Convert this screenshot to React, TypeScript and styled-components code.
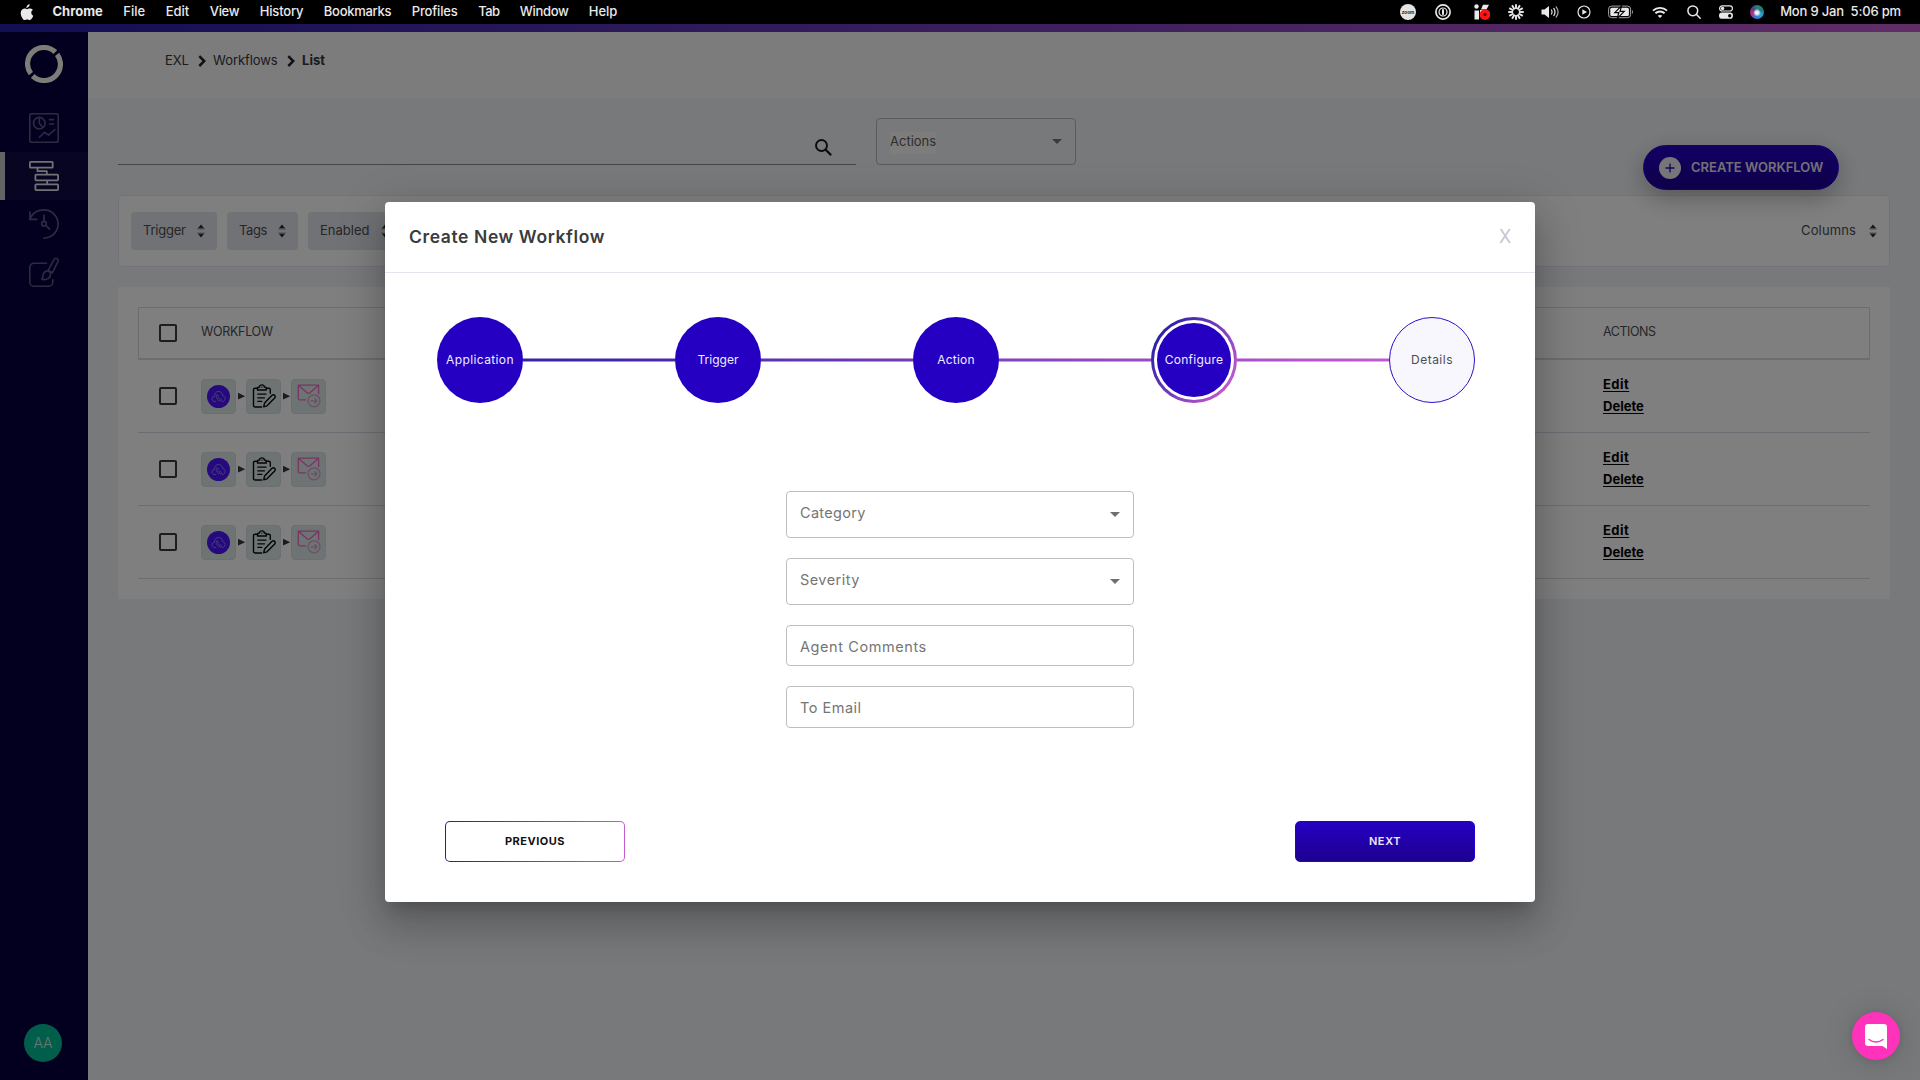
import React from "react";
import styled, { createGlobalStyle, css } from "styled-components";

const GlobalStyle = createGlobalStyle`
  *, *::before, *::after { box-sizing: border-box; }
  html, body { margin: 0; padding: 0; }
  body {
    width: 1920px;
    height: 1080px;
    overflow: hidden;
    background: #000;
    color: #44464a;
    font-family: Inter, "Liberation Sans", sans-serif;
    font-size: 13px;
  }
  button { font: inherit; border: 0; padding: 0; background: none; }
  svg { display: block; flex: none; }
`;

const Screen = styled.div`
  width: 1920px;
  height: 1080px;
  display: flex;
  flex-direction: column;
`;

/* ---------- macOS menu bar ---------- */

const MenuBar = styled.header`
  height: 24px;
  flex: none;
  display: flex;
  align-items: center;
  justify-content: space-between;
  padding: 0 19px 0 20px;
  background: #000;
  color: #e9e9e9;
  font-size: 13px;
  font-weight: 500;
`;

const MenuGroup = styled.div`
  display: flex;
  align-items: center;
`;

const MenuItem = styled.span<{ $bold?: boolean; $ls?: number }>`
  margin-left: ${(p) => (p.$bold ? 18.5 : 20.5)}px;
  padding-bottom: 2px;
  font-weight: ${(p) => (p.$bold ? 700 : 500)};
  letter-spacing: ${(p) => p.$ls ?? 0}px;
  white-space: pre;
`;

const StatusSlot = styled.span<{ $gap: number }>`
  margin-left: ${(p) => p.$gap}px;
`;

const Clock = styled.span`
  margin-left: 16px;
  padding-bottom: 2px;
  letter-spacing: -0.17px;
  white-space: pre;
`;

const AppleLogo = () => (
  <svg width="14" height="17" viewBox="0 0 14 17" fill="#e9e9e9">
    <path d="M9.6 0.2c.1 1-.3 1.900-.9 2.600-.6.700-1.500 1.100-2.300 1.100-.1-.9.300-1.900.9-2.500.6-.700 1.600-1.200 2.300-1.200zM12.900 6c-1 .6-1.600 1.500-1.600 2.700 0 1.400.8 2.500 2 3-.3.900-.7 1.700-1.200 2.400-.7 1-1.400 2-2.400 2-1 0-1.300-.6-2.500-.6s-1.600.6-2.500.6c-1 0-1.800-1.100-2.500-2.100C.9 12.100.2 9.300 1.100 7.100 1.700 5.500 3.200 4.500 4.600 4.500c1 0 1.900.7 2.500.7s1.700-.8 2.900-.7c.5 0 2 .2 2.900 1.500z" />
  </svg>
);

const ZoomStatus = () => (
  <svg width="16" height="16" viewBox="0 0 16 16">
    <circle cx="8" cy="8" r="8" fill="#e4e4e4" />
    <text x="8" y="9.600" fontSize="4.600" fontWeight="700" textAnchor="middle" fill="#222" fontFamily="Inter, sans-serif">zoom</text>
  </svg>
);

const KeyStatus = () => (
  <svg width="16" height="16" viewBox="0 0 16 16" fill="none" stroke="#e9e9e9">
    <circle cx="8" cy="8" r="7.100" strokeWidth="1.700" />
    <circle cx="8" cy="8" r="4" strokeWidth="1.200" />
    <path d="M8 5.200v5.600" strokeWidth="2" />
  </svg>
);

const RecordStatus = () => (
  <svg width="16" height="16" viewBox="0 0 16 16" fill="#e9e9e9">
    <circle cx="2.500" cy="2.500" r="2.200" />
    <path d="M7 5.500 9 .8h6L12.500 5.500zM.5 6.500H5V15.500H.5z" />
    <path d="M6 6h4v4H6z" />
    <circle cx="11" cy="10.500" r="5.400" fill="#ff1414" />
    <circle cx="11" cy="10.500" r="1.700" fill="#6b0000" />
  </svg>
);

const BurstStatus = () => (
  <svg width="16" height="16" viewBox="0 0 16 16" stroke="#e9e9e9" strokeWidth="1.900">
    {Array.from({ length: 12 }, (_, i) => (
      <path key={i} d="M8 .2v4.900" transform={`rotate(${i * 30} 8 8)`} />
    ))}
  </svg>
);

const VolumeStatus = () => (
  <svg width="18" height="14" viewBox="0 0 18 14" fill="none" stroke="#e9e9e9" strokeLinecap="round">
    <path d="M.5 4.500h3L8 1v12L3.500 9.500h-3z" fill="#e9e9e9" stroke="none" />
    <path d="M10.500 5c.8 1.200.8 2.800 0 4" strokeWidth="1.200" />
    <path d="M12.800 3.400c1.500 2.200 1.500 5 0 7.200" strokeWidth="1.200" />
    <path d="M15.200 1.800c2.300 3.200 2.300 7.200 0 10.400" strokeWidth="1.200" stroke="#a8a8a8" />
  </svg>
);

const PlayStatus = () => (
  <svg width="14" height="14" viewBox="0 0 14 14">
    <circle cx="7" cy="7" r="6" fill="none" stroke="#e9e9e9" strokeWidth="1.200" />
    <path d="M5.300 4.200 10 7 5.300 9.800z" fill="#e9e9e9" />
  </svg>
);

const BatteryStatus = () => (
  <svg width="26" height="14" viewBox="0 0 26 14">
    <rect x=".6" y="1.100" width="22" height="11.600" rx="3" fill="none" stroke="#a5a5a5" />
    <rect x="2.300" y="2.800" width="18.600" height="8.200" rx="1.500" fill="#e9e9e9" />
    <path d="M24.200 5v4c1.200-.6 1.200-3.400 0-4z" fill="#a5a5a5" />
    <path d="M13.500.8 6.800 7.700h4l-1.500 5.600L16.200 6.400h-4.100z" fill="#e9e9e9" stroke="#000" strokeWidth="1.200" />
  </svg>
);

const WifiStatus = () => (
  <svg width="16" height="13" viewBox="0 0 16 13" fill="none" stroke="#e9e9e9" strokeWidth="1.900">
    <path d="M.9 4.600C4.900.9 11.100.9 15.100 4.600" />
    <path d="M3.400 7.300c2.600-2.400 6.600-2.400 9.200 0" />
    <path d="M8 12 5.700 9.700c1.300-1.100 3.300-1.100 4.600 0z" fill="#e9e9e9" stroke="none" />
  </svg>
);

const SpotlightStatus = () => (
  <svg width="14" height="14" viewBox="0 0 14 14" fill="none" stroke="#e9e9e9" strokeWidth="1.500" strokeLinecap="round">
    <circle cx="5.800" cy="5.800" r="4.900" />
    <path d="m9.500 9.500 3.700 3.700" />
  </svg>
);

const ControlStatus = () => (
  <svg width="14" height="14" viewBox="0 0 14 14">
    <rect x=".6" y=".8" width="12.800" height="5.200" rx="2.600" fill="none" stroke="#e9e9e9" strokeWidth="1.200" />
    <circle cx="3.600" cy="3.400" r="1.700" fill="#e9e9e9" />
    <rect x="0" y="7.600" width="14" height="6.200" rx="3.100" fill="#e9e9e9" />
    <circle cx="10.700" cy="10.700" r="1.700" fill="#000" />
  </svg>
);

const SiriOrb = styled.span`
  display: block;
  width: 14px;
  height: 14px;
  border-radius: 50%;
  background:
    radial-gradient(circle at 50% 55%, #e8f6ff 0 1.500px, rgba(232, 246, 255, 0) 4px),
    conic-gradient(from 0deg, #2c7f77, #1f7c74 70deg, #2c9be0 120deg, #2b7bd8 190deg, #b52e7d 250deg, #5a3c8c 310deg, #2c7f77);
`;

/* ---------- application shell ---------- */

const AppFrame = styled.div`
  position: relative;
  flex: 1;
  min-height: 0;
  display: flex;
  flex-direction: column;
`;

const BrandStrip = styled.div`
  height: 8px;
  flex: none;
  background: linear-gradient(90deg, #241ea6, #c25bcf);
`;

const Shell = styled.div`
  flex: 1;
  min-height: 0;
  display: flex;
`;

const Sidebar = styled.nav`
  width: 88px;
  flex: none;
  display: flex;
  flex-direction: column;
  align-items: center;
  padding: 13px 0 18px;
  background: #04003c;
`;

const NavList = styled.div`
  width: 100%;
  margin-top: 21px;
  flex: 1;
`;

const NavItem = styled.div<{ $active?: boolean }>`
  height: 48px;
  padding: ${(p) => (p.$active ? "9px 0 0 24px" : "9px 0 0 29px")};
  ${(p) =>
    p.$active &&
    css`
      border-left: 5px solid #c9c9cf;
      background: #100b46;
    `}
`;

const Avatar = styled.div`
  width: 38px;
  height: 38px;
  margin-right: 2px;
  border-radius: 50%;
  background: #00bd94;
  color: #d8e6e0;
  font-size: 14px;
  font-weight: 300;
  line-height: 38px;
  text-align: center;
`;

const Logo = () => (
  <svg width="38" height="38" viewBox="0 0 38 38" fill="none" stroke="#fbf8ee" strokeWidth="5.200">
    <path d="M30.300 7.200A16.300 16.300 0 0 0 5.900 28.700" />
    <path d="M7.700 30.800A16.300 16.300 0 0 0 32.100 9.300" />
  </svg>
);

const DashboardIcon = () => (
  <svg width="30" height="30" viewBox="0 0 30 30" fill="none" stroke="#5b5781" strokeWidth="1.600" strokeLinecap="round" strokeLinejoin="round">
    <rect x=".8" y=".8" width="28.400" height="28.400" rx="2" />
    <circle cx="10.300" cy="10.200" r="5.800" />
    <path d="M10.300 4.500v5.700l3.600 4.300M20.500 6.600h4M20.500 11h4M10.500 24.200l5-4.900 4 2.900 6.500-5.700" />
  </svg>
);

const FlowIcon = () => (
  <svg width="30" height="30" viewBox="0 0 30 30" fill="none" stroke="#e4e2ec" strokeWidth="1.800" strokeLinejoin="round">
    <rect x=".9" y=".9" width="22.800" height="5.800" rx=".8" />
    <rect x="6.400" y="13.700" width="22.700" height="5.600" rx=".8" />
    <rect x="6.400" y="23.300" width="22.700" height="5.800" rx=".8" />
    <path d="M8.500 7v3.200h9.300v3.500M18.200 19.300v4" />
  </svg>
);

const HistoryIcon = () => (
  <svg width="30" height="30" viewBox="0 0 30 30" fill="none" stroke="#5b5781" strokeWidth="1.700" strokeLinecap="round" strokeLinejoin="round">
    <path d="M1.500 8.800C4 4 9 .9 15 .9a14.100 14.100 0 0 1 0 28.200M.9 3v7.300h6.800" />
    <path d="M15 6.200v6.200M17 16.500l3.500 3.600" />
    <circle cx="15" cy="14.700" r="2.300" />
  </svg>
);

const DesignIcon = () => (
  <svg width="30" height="30" viewBox="0 0 30 30" fill="none" stroke="#5b5781" strokeWidth="1.600" strokeLinecap="round" strokeLinejoin="round">
    <path d="M17.500 6.300H4.800a4 4 0 0 0-4 4v14.900a4 4 0 0 0 4 4h15a4 4 0 0 0 4-4v-2.500" />
    <path d="M19.200 13.400 25 2.500c1.300-2.300 4.900-.9 4 1.800l-5.600 11.500z" />
    <path d="M19.200 13.600c-5 .2-5 4-6.200 8.900 4.300.5 9-.8 8.600-6.400z" />
  </svg>
);

const Main = styled.main`
  flex: 1;
  min-width: 0;
  display: flex;
  flex-direction: column;
  background: #f1f3f7;
`;

const TopBar = styled.div`
  height: 66px;
  flex: none;
  display: flex;
  align-items: flex-start;
  padding: 20px 0 0 77px;
  background: #f8f8fb;
  font-size: 13px;
  line-height: 16px;
`;

const Crumb = styled.span<{ $current?: boolean; $ls?: number }>`
  color: #34363c;
  font-weight: ${(p) => (p.$current ? 700 : 400)};
  letter-spacing: ${(p) => p.$ls ?? 0}px;
`;

const CrumbArrow = () => (
  <svg width="24.500" height="16" viewBox="0 0 24.500 16" fill="none" stroke="#202126" strokeWidth="2.500">
    <path d="m10.300 4.200 4.900 4.900-4.900 4.900" />
  </svg>
);

const Content = styled.div`
  padding: 20px 30px 0;
`;

const Toolbar = styled.div`
  display: flex;
  height: 77px;
`;

const SearchField = styled.div`
  width: 738px;
  height: 47px;
  display: flex;
  justify-content: flex-end;
  padding: 20px 23px 0 0;
  border-bottom: 1px solid #8b8c90;
`;

const SearchIcon = () => (
  <svg width="19" height="19" viewBox="0 0 19 19" fill="none" stroke="#15161a" strokeWidth="1.900">
    <circle cx="7.500" cy="7.500" r="5.500" />
    <path d="m11.600 11.600 5.600 5.600" strokeWidth="2.200" />
  </svg>
);

const ActionSelect = styled.div`
  width: 200px;
  height: 47px;
  margin-left: 20px;
  padding: 13px 13px 0 13px;
  display: flex;
  justify-content: space-between;
  border: 1px solid #b5b7bb;
  border-radius: 4px;
`;

const ActionLabel = styled.span`
  height: 22px;
  background: #fcfaf9;
  color: #5c5d61;
  line-height: 18px;
`;

const Caret = styled.span<{ $top: number; $color: string }>`
  width: 10px;
  height: 5px;
  margin-top: ${(p) => p.$top}px;
  border: 5px solid transparent;
  border-top-color: ${(p) => p.$color};
  border-bottom-width: 0;
`;

const CreateButton = styled.button`
  width: 196px;
  height: 45px;
  margin: 27px 51px 0 auto;
  display: flex;
  align-items: center;
  padding-left: 15px;
  border: 1px solid #2d00e0;
  border-radius: 23px;
  background: linear-gradient(#2500c6, #1c0094);
  box-shadow: 0 8px 24px rgba(0, 0, 0, 0.28);
  color: #e4e1ee;
  font-size: 13px;
  font-weight: 600;
  z-index: 0;
`;

const PlusBadge = () => (
  <svg width="22" height="22" viewBox="0 0 22 22">
    <circle cx="11" cy="11" r="11" fill="#ececf0" />
    <path d="M11 6.500v9M6.500 11h9" stroke="#2500c6" strokeWidth="1.300" />
  </svg>
);

const CreateLabel = styled.span`
  margin-left: 10px;
  padding-bottom: 1px;
  line-height: 18px;
  white-space: nowrap;
`;

const FilterCard = styled.div`
  height: 72px;
  display: flex;
  align-items: flex-start;
  gap: 10px;
  padding: 16px 12px 0;
  border: 1px solid #e4e5ee;
  border-radius: 4px;
  background: #fff;
`;

const FilterChip = styled.button<{ $w: number; $plain?: boolean }>`
  width: ${(p) => p.$w}px;
  height: 38px;
  display: flex;
  align-items: center;
  justify-content: space-between;
  padding: ${(p) => (p.$plain ? "0" : "0 12px")};
  margin-left: ${(p) => (p.$plain ? "auto" : "0")};
  border-radius: 4px;
  background: ${(p) => (p.$plain ? "transparent" : "#e3e4ea")};
  color: #4b4d51;
  font-size: 13px;
`;

const ChipLabel = styled.span<{ $ls?: number }>`
  padding-bottom: 3px;
  letter-spacing: ${(p) => p.$ls ?? 0}px;
`;

const SortIcon = () => (
  <svg width="8" height="14" viewBox="0 0 8 14">
    <path d="M4 .5 7.300 4.500H.7zM4 13.500 7.300 9.500H.7z" fill="#2c2d31" />
    <path d="M.3 5h7.400M.3 9h7.400" stroke="#9a9b9f" />
  </svg>
);

const TableCard = styled.div`
  height: 312px;
  margin-top: 20px;
  padding: 20px;
  background: #fff;
`;

const HeadRow = styled.div`
  height: 53px;
  display: flex;
  align-items: center;
  padding-left: 20px;
  border: 1px solid #d9d9e6;
  border-bottom-width: 2px;
  border-radius: 1px;
  color: #4a4c50;
`;

const Row = styled.div`
  height: 73px;
  display: flex;
  align-items: center;
  padding-left: 21px;
  border-bottom: 1px solid #d9d9e6;
`;

const Checkbox = styled.span`
  width: 18px;
  height: 18px;
  flex: none;
  border: 2px solid #3a3b3d;
  border-radius: 2px;
`;

const FlowCell = styled.div`
  width: 1426px;
  flex: none;
  padding-left: 24px;
  display: flex;
  align-items: center;
`;

const HeadText = styled.span<{ $ls?: number }>`
  padding-bottom: 4px;
  font-size: 12.500px;
  letter-spacing: ${(p) => p.$ls ?? 0}px;
`;

const Tile = styled.span`
  width: 35px;
  height: 35px;
  display: flex;
  align-items: center;
  justify-content: center;
  border: 1px solid #d9dfe1;
  border-radius: 4px;
  background: #dde6e8;
`;

const StepArrow = () => (
  <svg width="10" height="8" viewBox="0 0 10 8" fill="#38393b">
    <path d="M2 .8v6.700L9.200 4.200z" />
  </svg>
);

const CloudIcon = () => (
  <svg width="23" height="23" viewBox="0 0 23 23" fill="none" stroke="#9a84ff" strokeWidth=".9" strokeLinecap="round" strokeLinejoin="round">
    <circle cx="11.500" cy="11.500" r="11.500" fill="#4a12fb" stroke="none" />
    <path d="M8.800 16.600H8c-4 0-4-5.200-.5-5.300C7.300 5 15.300 4.800 15.800 10.800c3.300.3 3.200 5.600-.4 5.800" />
    <path d="M9.300 10.300c-.9 2.900 1.900 6 4.900 5.500l.4-1.500-1.500-.8-.8.600c-.7-.3-1.200-.9-1.400-1.600l.6-.7-.8-1.600z" strokeWidth=".8" />
  </svg>
);

const ClipboardIcon = () => (
  <svg width="24" height="24" viewBox="0 0 24 24" fill="none" stroke="#08090a" strokeWidth="1.400" strokeLinecap="round" strokeLinejoin="round">
    <path d="M5 4.200H3.200A1.600 1.600 0 0 0 1.500 5.800v15.600A1.600 1.600 0 0 0 3.200 23h6.500M14.800 4.200h1.900a1.600 1.600 0 0 1 1.600 1.600v3.500" />
    <path d="M5.500 6V4.400C5.500 3.500 6.200 3 7.500 3 7.600.2 12.200.2 12.300 3c1.300 0 2 .5 2 1.400V6z" />
    <path d="M9.900 3.100v.1M5.800 10.200h8.200M5.800 13.800h6.700M5.800 17.400h4" strokeWidth="1.200" />
    <path d="M12.600 19 20 11.300c1.700-1.500 4.300.8 2.700 2.700L15 21.800l-3.300 1.100z" />
  </svg>
);

const MailIcon = () => (
  <svg width="24" height="24" viewBox="0 0 24 24" fill="none" stroke="#f26ac8" strokeWidth="1.300" strokeLinecap="round" strokeLinejoin="round">
    <path d="M8.500 15.800H2.700A1.400 1.400 0 0 1 1.300 14.400V1.200h20.300v8.500M1.800 1.500l8.200 7.200c1 .8 2 .8 3 0l8.200-7.200" />
    <circle cx="17" cy="16.800" r="6" stroke="#db9fc8" />
    <path d="M14 16.800h6M17.800 14.600l2.200 2.200-2.200 2.200" stroke="#db9fc8" />
  </svg>
);

const LinkStack = styled.div`
  display: flex;
  flex-direction: column;
  align-items: flex-start;
  padding-bottom: 2px;
  line-height: 22px;
`;

const RowLink = styled.a<{ $ls?: number }>`
  color: #050505;
  font-weight: 700;
  font-size: 13px;
  letter-spacing: ${(p) => p.$ls ?? 0}px;
  text-decoration: underline;
  text-underline-offset: 2px;
`;

/* ---------- modal ---------- */

const Backdrop = styled.div`
  position: absolute;
  inset: 0;
  display: flex;
  align-items: flex-start;
  justify-content: center;
  padding-top: 178px;
  background: rgba(0, 0, 0, 0.5);
`;

const Dialog = styled.section`
  width: 1150px;
  height: 700px;
  display: flex;
  flex-direction: column;
  border-radius: 4px;
  background: #fff;
  box-shadow:
    0 11px 15px -7px rgba(0, 0, 0, 0.2),
    0 24px 38px 3px rgba(0, 0, 0, 0.14),
    0 9px 46px 8px rgba(0, 0, 0, 0.12);
`;

const DialogHead = styled.div`
  height: 71px;
  flex: none;
  display: flex;
  justify-content: space-between;
  padding: 22px 24px 0;
  border-bottom: 1px solid #e2e5ef;
`;

const DialogTitle = styled.h2`
  margin: 0;
  color: #3a3b3d;
  font-size: 17.500px;
  font-weight: 600;
  letter-spacing: 0.6px;
  line-height: 25px;
`;

const CloseButton = styled.button`
  width: 12px;
  height: 25px;
  color: #c6c6c6;
  font-size: 18px;
  line-height: 25px;
`;

const Stepper = styled.div`
  display: flex;
  align-items: center;
  margin: 44px 60px 0 52px;
`;

const Connector = styled.span<{ $from: string; $to: string }>`
  height: 4px;
  flex: 1;
  border: solid rgba(255, 255, 255, 0.5);
  border-width: 1px 0;
  background: linear-gradient(90deg, ${(p) => p.$from}, ${(p) => p.$to}) border-box;
`;

const StepCircle = styled.div<{ $todo?: boolean }>`
  width: 86px;
  height: 86px;
  flex: none;
  display: flex;
  align-items: center;
  justify-content: center;
  border: ${(p) => (p.$todo ? "1px solid #2f10cc" : "0")};
  border-radius: 50%;
  background: ${(p) => (p.$todo ? "#f8f7fe" : "#2500c2")};
  color: ${(p) => (p.$todo ? "#4c4d51" : "#f1eeff")};
  font-size: 12px;
`;

const ActiveRing = styled(StepCircle)`
  border: 3px solid transparent;
  background:
    linear-gradient(#fff, #fff) padding-box,
    linear-gradient(125deg, #241ea6 10%, #c65ad0 90%) border-box;
`;

const ActiveCore = styled.span`
  width: 74px;
  height: 74px;
  border-radius: 50%;
  background: #2500c2;
  display: flex;
  align-items: center;
  justify-content: center;
`;

const StepText = styled.span<{ $ls?: number }>`
  padding-bottom: 2px;
  letter-spacing: ${(p) => p.$ls ?? 0}px;
`;

const Form = styled.div`
  width: 348px;
  margin: 88px auto 0 401px;
  display: flex;
  flex-direction: column;
  gap: 20px;
`;

const Field = styled.div<{ $h: number }>`
  height: ${(p) => p.$h}px;
  display: flex;
  justify-content: space-between;
  padding: 10px 13px 0;
  border: 1px solid #bebebe;
  border-radius: 4px;
  color: #757575;
  font-size: 14.500px;
  line-height: 22px;
`;

const FieldText = styled.span<{ $ls?: number }>`
  letter-spacing: ${(p) => p.$ls ?? 0}px;
`;

const DialogFoot = styled.div`
  margin-top: auto;
  display: flex;
  justify-content: space-between;
  padding: 0 60px 40px;
`;

const FootButton = styled.button<{ $primary?: boolean; $ls?: number }>`
  width: 180px;
  height: 41px;
  padding-bottom: 2px;
  border-radius: 5px;
  font-size: 11px;
  font-weight: 700;
  letter-spacing: ${(p) => p.$ls ?? 0}px;
  border: 1px solid transparent;
  ${(p) =>
    p.$primary
      ? css`
          border-color: #2400d6;
          background: linear-gradient(#2500c2, #1e0090);
          color: #ece8ff;
          font-weight: 600;
        `
      : css`
          background:
            linear-gradient(#fff, #fff) padding-box,
            linear-gradient(90deg, #241ea6, #c65ad0) border-box;
          color: #121212;
        `}
`;

const ChatBubble = styled.button`
  position: absolute;
  right: 20px;
  bottom: 20px;
  width: 48px;
  height: 48px;
  display: flex;
  align-items: center;
  justify-content: center;
  border-radius: 50%;
  background: #ff33bb;
  box-shadow: 0 1px 6px rgba(0, 0, 0, 0.1), 0 2px 32px rgba(0, 0, 0, 0.16);
`;

const ChatIcon = () => (
  <svg width="22" height="25" viewBox="0 0 22 25">
    <path d="M3 0h16a3 3 0 0 1 3 3v22l-4.500-3H3a3 3 0 0 1-3-3V3a3 3 0 0 1 3-3z" fill="#fff" />
    <path d="M4 15.500c4 3.300 10 3.300 14 0" fill="none" stroke="#ff33bb" strokeWidth="1.500" strokeLinecap="round" />
  </svg>
);

const menuItems: [string, number][] = [
  ["File", 0],
  ["Edit", 0],
  ["View", -0.3],
  ["History", -0.17],
  ["Bookmarks", -0.28],
  ["Profiles", -0.15],
  ["Tab", -0.6],
  ["Window", -0.35],
  ["Help", -0.1],
];

const filters: [string, number, number][] = [
  ["Trigger", 86, -0.22],
  ["Tags", 71, -0.4],
  ["Enabled", 93, 0],
];

const workflows = [1, 2, 3];

export default function App() {
  return (
    <Screen>
      <GlobalStyle />
      <MenuBar>
        <MenuGroup>
          <AppleLogo />
          <MenuItem $bold>Chrome</MenuItem>
          {menuItems.map(([label, ls]) => (
            <MenuItem key={label} $ls={ls}>{label}</MenuItem>
          ))}
        </MenuGroup>
        <MenuGroup>
          <StatusSlot $gap={0}><ZoomStatus /></StatusSlot>
          <StatusSlot $gap={19}><KeyStatus /></StatusSlot>
          <StatusSlot $gap={23}><RecordStatus /></StatusSlot>
          <StatusSlot $gap={18}><BurstStatus /></StatusSlot>
          <StatusSlot $gap={17}><VolumeStatus /></StatusSlot>
          <StatusSlot $gap={18}><PlayStatus /></StatusSlot>
          <StatusSlot $gap={17}><BatteryStatus /></StatusSlot>
          <StatusSlot $gap={18}><WifiStatus /></StatusSlot>
          <StatusSlot $gap={19}><SpotlightStatus /></StatusSlot>
          <StatusSlot $gap={18}><ControlStatus /></StatusSlot>
          <StatusSlot $gap={17}><SiriOrb /></StatusSlot>
          <Clock>Mon 9 Jan  5:06 pm</Clock>
        </MenuGroup>
      </MenuBar>
      <AppFrame>
        <BrandStrip />
        <Shell>
          <Sidebar>
            <Logo />
            <NavList>
              <NavItem><DashboardIcon /></NavItem>
              <NavItem $active><FlowIcon /></NavItem>
              <NavItem><HistoryIcon /></NavItem>
              <NavItem><DesignIcon /></NavItem>
            </NavList>
            <Avatar>AA</Avatar>
          </Sidebar>
          <Main>
            <TopBar>
              <Crumb $ls={-0.15}>EXL</Crumb>
              <CrumbArrow />
              <Crumb $ls={-0.08}>Workflows</Crumb>
              <CrumbArrow />
              <Crumb $current>List</Crumb>
            </TopBar>
            <Content>
              <Toolbar>
                <SearchField><SearchIcon /></SearchField>
                <ActionSelect>
                  <ActionLabel>Actions</ActionLabel>
                  <Caret $top={7} $color="#76777b" />
                </ActionSelect>
                <CreateButton>
                  <PlusBadge />
                  <CreateLabel>CREATE WORKFLOW</CreateLabel>
                </CreateButton>
              </Toolbar>
              <FilterCard>
                {filters.map(([label, width, ls]) => (
                  <FilterChip key={label} $w={width}>
                    <ChipLabel $ls={ls}>{label}</ChipLabel>
                    <SortIcon />
                  </FilterChip>
                ))}
                <FilterChip $w={76} $plain>
                  <ChipLabel $ls={0.15}>Columns</ChipLabel>
                  <SortIcon />
                </FilterChip>
              </FilterCard>
              <TableCard>
                <HeadRow>
                  <Checkbox />
                  <FlowCell><HeadText $ls={-0.3}>WORKFLOW</HeadText></FlowCell>
                  <HeadText $ls={-0.45}>ACTIONS</HeadText>
                </HeadRow>
                {workflows.map((id) => (
                  <Row key={id}>
                    <Checkbox />
                    <FlowCell>
                      <Tile><CloudIcon /></Tile>
                      <StepArrow />
                      <Tile><ClipboardIcon /></Tile>
                      <StepArrow />
                      <Tile><MailIcon /></Tile>
                    </FlowCell>
                    <LinkStack>
                      <RowLink $ls={0.45}>Edit</RowLink>
                      <RowLink>Delete</RowLink>
                    </LinkStack>
                  </Row>
                ))}
              </TableCard>
            </Content>
          </Main>
        </Shell>
        <Backdrop>
          <Dialog>
            <DialogHead>
              <DialogTitle>Create New Workflow</DialogTitle>
              <CloseButton>X</CloseButton>
            </DialogHead>
            <Stepper>
              <StepCircle><StepText $ls={0.38}>Application</StepText></StepCircle>
              <Connector $from="#3424a6" $to="#4a2aac" />
              <StepCircle><StepText>Trigger</StepText></StepCircle>
              <Connector $from="#5a32b0" $to="#7639b6" />
              <StepCircle><StepText $ls={0.2}>Action</StepText></StepCircle>
              <Connector $from="#8240ba" $to="#9a4ac2" />
              <ActiveRing>
                <ActiveCore><StepText $ls={0.28}>Configure</StepText></ActiveCore>
              </ActiveRing>
              <Connector $from="#a950c6" $to="#c05ad0" />
              <StepCircle $todo><StepText $ls={0.5}>Details</StepText></StepCircle>
            </Stepper>
            <Form>
              <Field $h={47}><FieldText $ls={0.3}>Category</FieldText><Caret $top={10} $color="#707070" /></Field>
              <Field $h={47}><FieldText $ls={0.45}>Severity</FieldText><Caret $top={10} $color="#707070" /></Field>
              <Field $h={41}><FieldText $ls={0.58}>Agent Comments</FieldText></Field>
              <Field $h={42}><FieldText $ls={0.5}>To Email</FieldText></Field>
            </Form>
            <DialogFoot>
              <FootButton $ls={0.5}>PREVIOUS</FootButton>
              <FootButton $primary $ls={0.6}>NEXT</FootButton>
            </DialogFoot>
          </Dialog>
        </Backdrop>
        <ChatBubble><ChatIcon /></ChatBubble>
      </AppFrame>
    </Screen>
  );
}
